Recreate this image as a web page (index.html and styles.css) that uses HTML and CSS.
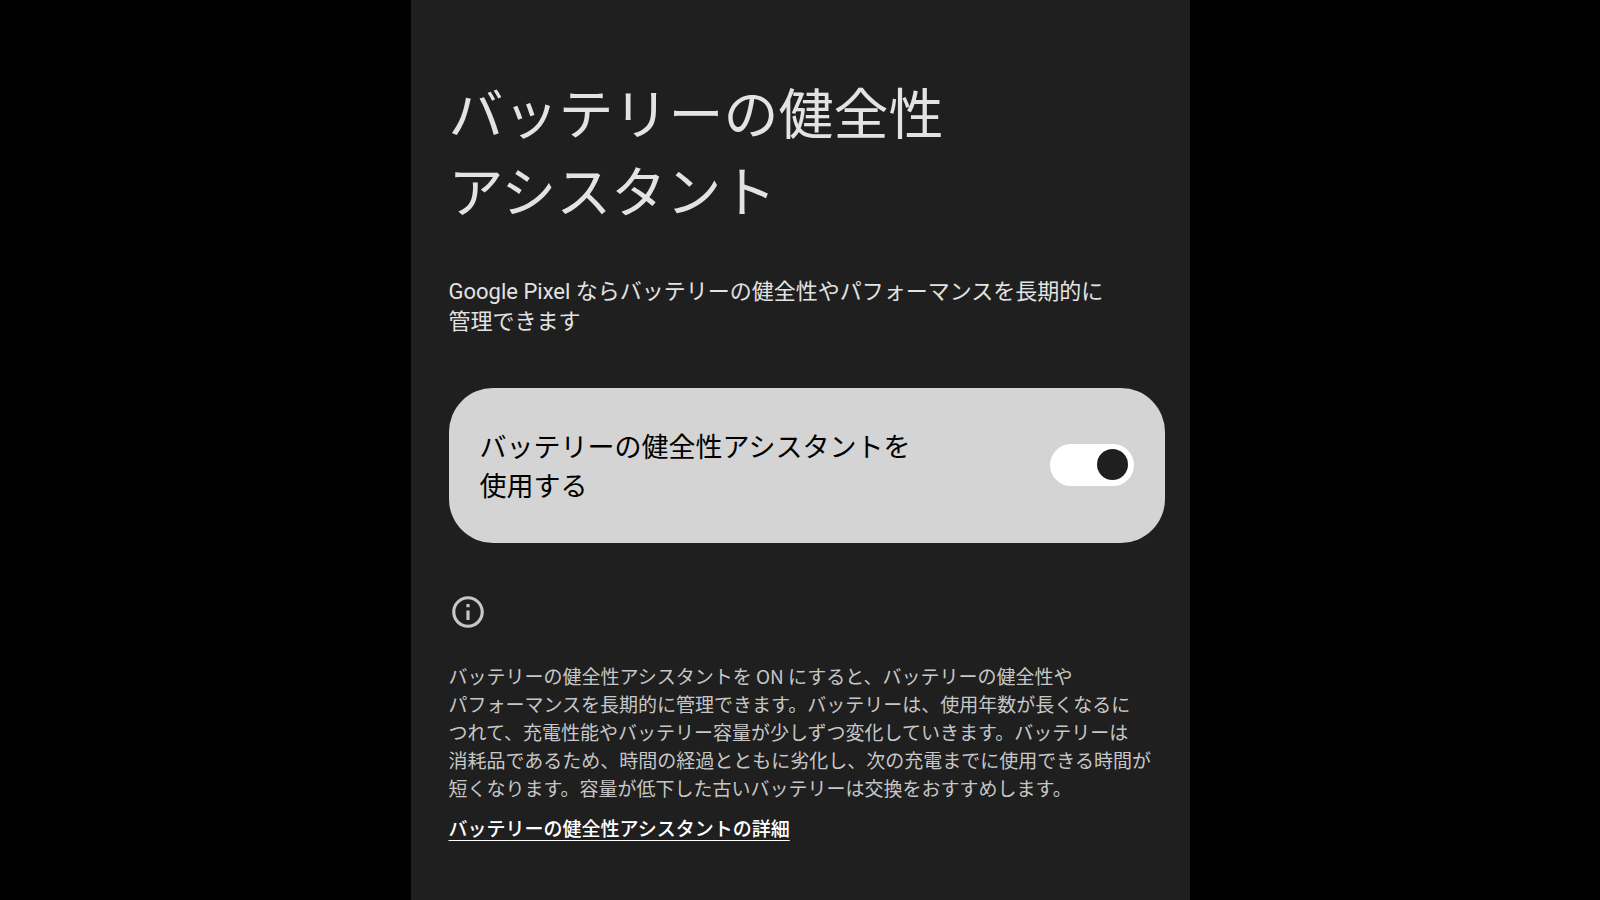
FILE: index.html
```
<!DOCTYPE html>
<html lang="ja">
<head>
    <meta charset="UTF-8">
    <meta name="viewport" content="width=device-width, initial-scale=1.0">
    <title>バッテリーの健全性アシスタント</title>
    <link rel="stylesheet" href="styles.css">
</head>
<body>
    <main class="screen">
        <h1 class="title">バッテリーの健全性<br>アシスタント</h1>
        <p class="intro">Google Pixel ならバッテリーの健全性やパフォーマンスを長期的に<br>管理できます</p>

        <div class="setting-card">
            <label class="setting-label" for="assistant">バッテリーの健全性アシスタントを<br>使用する</label>
            <input class="switch" type="checkbox" role="switch" id="assistant" checked>
        </div>

        <section class="info">
            <svg class="info-icon" viewBox="0 0 24 24" aria-hidden="true">
                <path d="M11 7h2v2h-2zm0 4h2v6h-2zm1-9C6.48 2 2 6.48 2 12s4.48 10 10 10 10-4.48 10-10S17.52 2 12 2zm0 18c-4.41 0-8-3.59-8-8s3.59-8 8-8 8 3.59 8 8-3.59 8-8 8z"/>
            </svg>
            <p class="info-text">
                バッテリーの健全性アシスタントを ON にすると、バッテリーの健全性や<br>パフォーマンスを長期的に管理できます。バッテリーは、使用年数が長くなるに<br>つれて、充電性能やバッテリー容量が少しずつ変化していきます。バッテリーは<br>消耗品であるため、時間の経過とともに劣化し、次の充電までに使用できる時間が<br>短くなります。容量が低下した古いバッテリーは交換をおすすめします。
            </p>
            <a class="info-link" href="#">バッテリーの健全性アシスタントの詳細</a>
        </section>
    </main>
</body>
</html>
```

FILE: styles.css
```
* {
    box-sizing: border-box;
}
body {
    margin: 0;
    background: #000;
    font-family: "Noto Sans CJK JP", sans-serif;
}
.screen {
    max-width: 779px;
    min-height: 100vh;
    margin: 0 auto;
    padding: 71px 25px 48px 38px;
    background: #1f1f1f;
    color: #e3e3e3;
}
.title {
    margin: 0 0 50px;
    font-size: 55px;
    font-weight: 400;
    line-height: 78px;
}
.intro {
    margin: 0 0 51px;
    font-family: Roboto, "Noto Sans CJK JP", sans-serif;
    font-size: 22px;
    line-height: 30px;
}
.setting-card {
    display: flex;
    align-items: center;
    justify-content: space-between;
    gap: 24px;
    min-height: 155px;
    padding: 30px 31px 32px;
    border-radius: 44px;
    background: #d4d4d4;
    color: #000;
}
.setting-label {
    font-size: 27px;
    line-height: 39px;
}
.switch {
    appearance: none;
    display: flex;
    align-items: center;
    justify-content: flex-end;
    flex: none;
    width: 84px;
    height: 42px;
    margin: 0;
    padding: 6px;
    border-radius: 21px;
    background: #fff;
    cursor: pointer;
}
.switch::before {
    content: "";
    width: 31px;
    height: 31px;
    border-radius: 50%;
    background: #1f1f1f;
}
.switch:not(:checked) {
    justify-content: flex-start;
}
.info {
    margin-top: 50px;
    font-size: 19px;
    line-height: 28px;
}
.info-icon {
    display: block;
    width: 38px;
    height: 38px;
    fill: #c7c7c7;
}
.info-text {
    margin: 31px 0 12px;
    color: #c7c7c7;
}
.info-link {
    color: #fff;
    font-weight: 500;
    text-underline-offset: 4px;
}
```
